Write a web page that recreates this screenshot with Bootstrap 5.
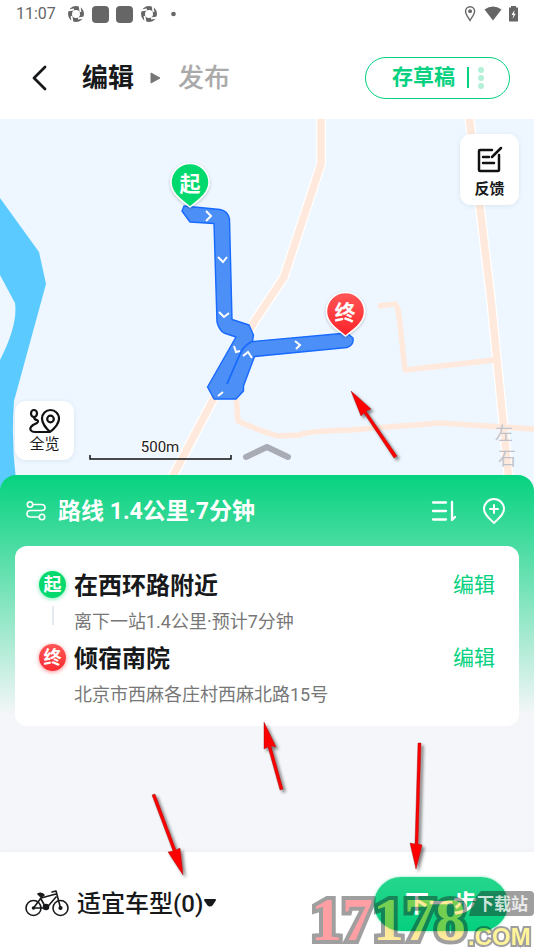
<!DOCTYPE html>
<html lang="zh-CN">
<head>
<meta charset="utf-8">
<meta name="viewport" content="width=device-width, initial-scale=1">
<title>编辑路线</title>
<link rel="stylesheet" href="https://cdn.jsdelivr.net/npm/bootstrap@5.3.0/dist/css/bootstrap.min.css">
<style>
:root { --brand: #06d180; --ink: #17191b; --muted-ink: #777; }
body { font-family: Roboto, "Noto Sans CJK SC", sans-serif; color: var(--ink); background: #fff; }
svg { display: block; flex: none; }
button { color: inherit; }
.plain { border: 0; background: none; padding: 0; }
.status { height: 28px; padding: 0 14px 0 16px; font-size: 16px; line-height: 28px; color: #666; }
.topbar { height: 91px; padding: 8px 24px 0 30px; }
.step { font-size: 26px; line-height: 40px; font-weight: 700; }
.step-next { color: #aaa; font-weight: 500; }
.draft { height: 42px; border: 1px solid var(--brand); border-radius: 21px; padding: 0 24px 0 26px; color: var(--brand); font-size: 21px; font-weight: 700; }
.draft-line { width: 2px; height: 21px; background: var(--brand); margin: 0 8px 0 12px; }
.map-canvas { width: 100%; height: auto; }
.tile { background: #fff; border-radius: 11px; box-shadow: 0 1px 5px #20406018; font-size: 15px; }
.tile-feedback { right: 15px; top: 15px; width: 59px; height: 71px; font-weight: 700; padding-top: 8px; }
.tile-overview { left: 15px; bottom: 31px; width: 59px; height: 59px; line-height: 20px; }
.sheet { margin-top: -16px; border-radius: 16px 16px 0 0; background: linear-gradient(#06d27f 0, #4adca2 71px, #f5f6f9 240px); padding: 0 15px 24px; }
.sheet-head { height: 73px; padding: 0 12px 0 11px; margin-bottom: -2px; color: #fff; }
.sheet-title { font-size: 23px; font-weight: 700; line-height: 36px; }
.stops { border-radius: 12px; padding: 21px 24px 13px; }
.stop-badge { width: 27px; height: 27px; border-radius: 50%; color: #fff; font-size: 18px; line-height: 27px; font-weight: 700; text-align: center; }
.stop-start { background: #05d96e; box-shadow: 0 1px 4px #05d96e88; }
.stop-end { background: linear-gradient(#ff5656, #fb2b31); box-shadow: 0 1px 4px #fb2b3188; }
.stop-link { width: 2px; height: 19px; background: #e5eaf3; }
.stop-name { font-size: 24px; line-height: 38px; font-weight: 700; }
.stop-note { font-size: 18px; line-height: 33px; padding-bottom: 2px; color: var(--muted-ink); }
.stop-edit { color: var(--brand); font-size: 21px; line-height: 36px; }
.bottom { height: 98px; padding: 5px 26px 0 25px; box-shadow: 0 -1px 6px #00000008; background: #fff; }
.vehicle { font-size: 24px; font-weight: 500; line-height: 36px; }
.next { width: 134px; height: 54px; border-radius: 27px; color: #fff; font-size: 24px; font-weight: 700; background: linear-gradient(#25d68c, #05d07f); box-shadow: 0 0 3px #06d18088; }
.overlay { left: 0; top: 0; width: 100%; pointer-events: none; }
</style>
<script src="https://cdn.jsdelivr.net/npm/bootstrap@5.3.0/dist/js/bootstrap.bundle.min.js"></script>
</head>
<body>
<div class="position-relative d-flex flex-column min-vh-100 overflow-hidden">

  <div class="status d-flex align-items-center justify-content-between">
    <div class="d-flex align-items-center">
      <span class="me-2">11:07</span>
      <svg width="116" height="18" viewBox="0 0 116 18" class="ms-1" fill="#666">
        <defs><g id="aperture"><circle r="6" fill="none" stroke="#666" stroke-width="4"/><path d="M-8.500 -3.500L-2 -4.500M3.500 -8.500L4.500 -2M8.500 3.500L2 4.500M-3.500 8.500L-4.500 2" stroke="#fff" stroke-width="1.800"/></g></defs>
        <use href="#aperture" x="8" y="9"/><use href="#aperture" x="81" y="9"/>
        <rect x="24" y="1" width="17" height="17" rx="4"/><rect x="48" y="1" width="17" height="17" rx="4"/>
        <circle cx="105.500" cy="9" r="2.300"/>
      </svg>
    </div>
    <svg width="56" height="18" viewBox="0 0 56 18" fill="#666">
      <path d="M6 15.500C4 12 1.600 9.300 1.600 6.200a4.500 4.500 0 0 1 9 0C10.600 9.300 8 12 6 15.500z" fill="none" stroke="#666" stroke-width="1.400"/><circle cx="6.100" cy="6.200" r="1.900"/>
      <path d="M20.500 4.500Q29 -1.500 37.500 4.500L29 15.500z"/>
      <path d="M45 2.500h2V1h5v1.500h2v14h-9z"/><path d="M50.500 5l-3 5h2l-1 4 3.200-5.200H50z" fill="#fff"/>
    </svg>
  </div>

  <header class="topbar d-flex align-items-center justify-content-between">
    <div class="d-flex align-items-center">
      <button class="plain" type="button" aria-label="返回"><svg width="20" height="28" viewBox="0 0 20 28"><path d="M15 3L4 14l11 11" fill="none" stroke="#17191b" stroke-width="2.800" stroke-linecap="round" stroke-linejoin="round"/></svg></button>
      <span class="step ms-4 ps-2 pe-3">编辑</span>
      <svg width="12" height="14" viewBox="0 0 12 14"><path d="M1 2L10 7 1 12z" fill="#777" stroke="#777" stroke-linejoin="round"/></svg>
      <span class="step step-next ms-3">发布</span>
    </div>
    <button class="draft bg-white d-flex align-items-center" type="button">存草稿
      <span class="draft-line"></span>
      <svg width="8" height="24" viewBox="0 0 8 24" fill="#b3f0d7"><circle cx="4" cy="4" r="3"/><circle cx="4" cy="12" r="3"/><circle cx="4" cy="20" r="3"/></svg>
    </button>
  </header>

  <section class="position-relative" aria-label="地图">
    <svg class="map-canvas" viewBox="0 119 534 372">
      <defs>
        <linearGradient id="redPin" x2="0" y2="1"><stop stop-color="#ff5656"/><stop offset="1" stop-color="#fb2329"/></linearGradient>
        <filter id="pinShade" x="-30%" y="-30%" width="160%" height="160%"><feDropShadow dx="0" dy="1" stdDeviation="1.500" flood-opacity=".25"/></filter>
      </defs>
      <rect y="119" width="534" height="372" fill="#eef7ff"/>
      <path d="M0 198L39 252 46 284 14 401Q11 440 16 480V491H0V360Q18 325 15 303L0 275z" fill="#5bcbff"/>
      <g fill="none" stroke-linejoin="round">
        <g stroke="#fff" stroke-width="10"><path d="M321 115V164L284 277 254 322 165 491M469 115L491 300 510 491"/></g>
        <g stroke="#ffe9dc" stroke-width="7.500"><path d="M321 115V164L284 277 254 322 165 491M469 115L491 300 510 491"/></g>
        <path d="M236 395L238 421Q255 429 277 436L300 435Q305 431 350 430L440 423 534 429M378 306L395 304Q398 306 399 316L405 370 494 360" stroke="#ffe9dc" stroke-width="5.500"/>
      </g>
      <g fill="#c0c3cc" font-size="18"><text x="495" y="440">左</text><text x="498" y="465">石</text></g>
      <path d="M184 206L182 211 190 222 214 223.500 217 322Q219 330 224 333L236 337 207.500 387 214 399H236L243.500 391V386L254.500 356.500 347 347.500Q354 345 353 338L347 333 252.500 341.500 253.500 335 249 325 232 319.500 229.500 219Q228 211 220 209.500z" fill="#4c8ff7" stroke="#1769ff" stroke-width="1.400" stroke-linejoin="round"/>
      <path d="M253 341Q244 345 240 354L227 384" fill="none" stroke="#1769ff" stroke-width="1.800"/>
      <g fill="none" stroke="#fff" stroke-width="2"><path d="M206 211l5 5-5 5M218 257l5 5 4-5M219 312l5 5 5-4M234 346l2 6 4-1M243 356l5-4 4 6M218 396l5-4M295 341l5 4-4 4"/></g>
      <g filter="url(#pinShade)" stroke="#fff" stroke-width="1.500">
        <path d="M190 207C183 201 171 194 171 182.500a19 19 0 0 1 38 0C209 194 197 201 190 207z" fill="#05d96e"/>
        <path d="M345.500 336C338 330 326.500 323 326.500 311.500a19 19 0 0 1 38 0C364.500 323 353 330 345.500 336z" fill="url(#redPin)"/>
      </g>
      <g fill="#fff" font-size="21" font-weight="700" text-anchor="middle"><text x="190" y="191">起</text><text x="345" y="320">终</text></g>
      <text x="160" y="452" text-anchor="middle" font-size="15" fill="#222" stroke="#fff" stroke-width="2" paint-order="stroke">500m</text>
      <path d="M90 455v4h141v-4" fill="none" stroke="#111" stroke-width="1.500"/>
      <path d="M246 457L267 447 288 457" fill="none" stroke="#a9abb5" stroke-width="6" stroke-linecap="round" stroke-linejoin="round"/>
    </svg>
    <button type="button" class="plain tile tile-feedback position-absolute d-flex flex-column align-items-center justify-content-center gap-1">
      <svg width="28" height="28" viewBox="0 0 28 28" fill="none" stroke="#111" stroke-width="2.500" stroke-linecap="round" stroke-linejoin="round"><path d="M16 4H4q-1 0-1 1v19q0 1 1 1h18q1 0 1-1V9M7 11h6M7 17h11M16 11L25 2"/></svg>
      反馈
    </button>
    <button type="button" class="plain tile tile-overview position-absolute d-flex flex-column align-items-center justify-content-center">
      <svg width="31" height="26" viewBox="0 0 31 26" fill="none" stroke="#111" stroke-width="2.200" stroke-linecap="round" stroke-linejoin="round"><ellipse cx="5" cy="5.500" rx="3" ry="3.500"/><path d="M5 9.500Q6 12 8 12q2 1 0 3L4 17q-4 3-2 5.500 1 1.500 4 1.500h15C17 20 13 16 13 10.500a8.500 8.500 0 0 1 17 0C30 16 26 20 21 24"/><circle cx="21.500" cy="11" r="3.300"/></svg>
      全览
    </button>
  </section>

  <main class="sheet position-relative flex-grow-1">
    <div class="sheet-head d-flex align-items-center">
      <svg width="20" height="22" viewBox="0 0 20 22" fill="none" stroke="#fff" stroke-width="1.600"><circle cx="4" cy="3.500" r="2.700"/><circle cx="16" cy="16" r="2.700"/><path d="M7 3.500h8.500q3.500 0 3.500 3t-3.500 3H4.500Q1 9.500 1 12.700t3.500 3.300H13"/></svg>
      <h1 class="sheet-title mb-0 ms-2 ps-1">路线 1.4公里·7分钟</h1>
      <button type="button" class="plain ms-auto" aria-label="排序"><svg width="26" height="26" viewBox="0 0 26 26" fill="none" stroke="#fff" stroke-width="2.300" stroke-linecap="round" stroke-linejoin="round"><path d="M2 3.500h13M2 12h13M2 20.500h13M21 3v18l3-3"/></svg></button>
      <button type="button" class="plain ms-4" aria-label="添加地点"><svg width="26" height="28" viewBox="0 0 26 28" fill="none" stroke="#fff" stroke-width="2" stroke-linecap="round" stroke-linejoin="round"><path d="M13 25C8 20 3 16.500 3 11a10 10 0 0 1 20 0C23 16.500 18 20 13 25zM13 7v8M9 11h8"/></svg></button>
    </div>
    <div class="stops bg-white position-relative">
      <div class="d-flex">
        <div class="d-flex flex-column align-items-center pt-1 me-2"><span class="stop-badge stop-start">起</span><span class="stop-link mt-2 pt-1"></span></div>
        <div class="flex-grow-1"><div class="stop-name">在西环路附近</div><div class="stop-note">离下一站1.4公里·预计7分钟</div></div>
        <button type="button" class="plain stop-edit align-self-start">编辑</button>
      </div>
      <div class="d-flex">
        <div class="pt-1 me-2"><div class="stop-badge stop-end">终</div></div>
        <div class="flex-grow-1"><div class="stop-name">倾宿南院</div><div class="stop-note">北京市西麻各庄村西麻北路15号</div></div>
        <button type="button" class="plain stop-edit align-self-start">编辑</button>
      </div>
    </div>
  </main>

  <footer class="bottom position-relative d-flex align-items-center justify-content-between">
    <button type="button" class="plain vehicle d-flex align-items-center">
      <svg width="44" height="30" viewBox="0 0 44 30" fill="none" stroke="#17191b" stroke-width="1.600" stroke-linecap="round" stroke-linejoin="round"><circle cx="8.500" cy="19" r="7.500"/><circle cx="35.500" cy="19" r="7.500"/><path d="M8.500 19L16 9 31 5M8.500 19h13L31 8M16 10l5 9M27 3l4-1 4.500 17"/><path d="M13 5q3-2 6 1l-3 2z" fill="#17191b"/><circle cx="21" cy="18" r="2.500" fill="#17191b"/><circle cx="8.500" cy="19" r="1" fill="#17191b"/><circle cx="35.500" cy="19" r="1.300" fill="#17191b"/></svg>
      <span class="ms-2">适宜车型(0)</span>
      <svg width="14" height="10" viewBox="0 0 14 10"><path d="M2 1h10L9 5.500q-2 2-4 0z" fill="#17191b" stroke="#17191b" stroke-width="2" stroke-linejoin="round"/></svg>
    </button>
    <button type="button" class="next plain">下一步</button>
  </footer>

  <svg class="overlay position-absolute" viewBox="0 0 534 950" aria-hidden="true">
    <defs><filter id="arrowShade" x="-50%" y="-20%" width="200%" height="140%"><feDropShadow dx="2.500" dy="2.500" stdDeviation="1.500" flood-opacity=".5"/></filter></defs>
    <g fill="#f00" stroke="#811" stroke-width=".4" filter="url(#arrowShade)">
      <path d="M351 391L371 409 366 411 397 456 394 458 364 413 361 416z"/>
      <path d="M264 722L276 747 271 746 283 789 280 790 268 747 264 749z"/>
      <path d="M155 794L176 850 180 848 183 875 168 852 173 851 152 795z"/>
      <path d="M418 743L415 844 410 843 416 869 422 845 418 844 421 743z"/>
    </g>
    <g opacity=".41" stroke-linejoin="miter">
      <path d="M481 891H530a4 4 0 0 1 4 4V912a4 4 0 0 1-4 4H469L473 900z" fill="#181818"/>
      <text x="311" y="940" font-family="'Liberation Serif', serif" font-weight="700" font-size="62" stroke="#181818" stroke-width="8" paint-order="stroke"><tspan fill="#ff1824">17</tspan><tspan fill="#ffca0c">178</tspan></text>
      <text x="468" y="945" font-family="'Liberation Sans', sans-serif" font-weight="700" font-size="24" stroke="#181818" stroke-width="4" paint-order="stroke" fill="#ffe60c">.COM</text>
    </g>
    <text x="477" y="910" font-size="17" font-weight="700" fill="#fff" fill-opacity=".8">下载站</text>
  </svg>
</div>
</body>
</html>
